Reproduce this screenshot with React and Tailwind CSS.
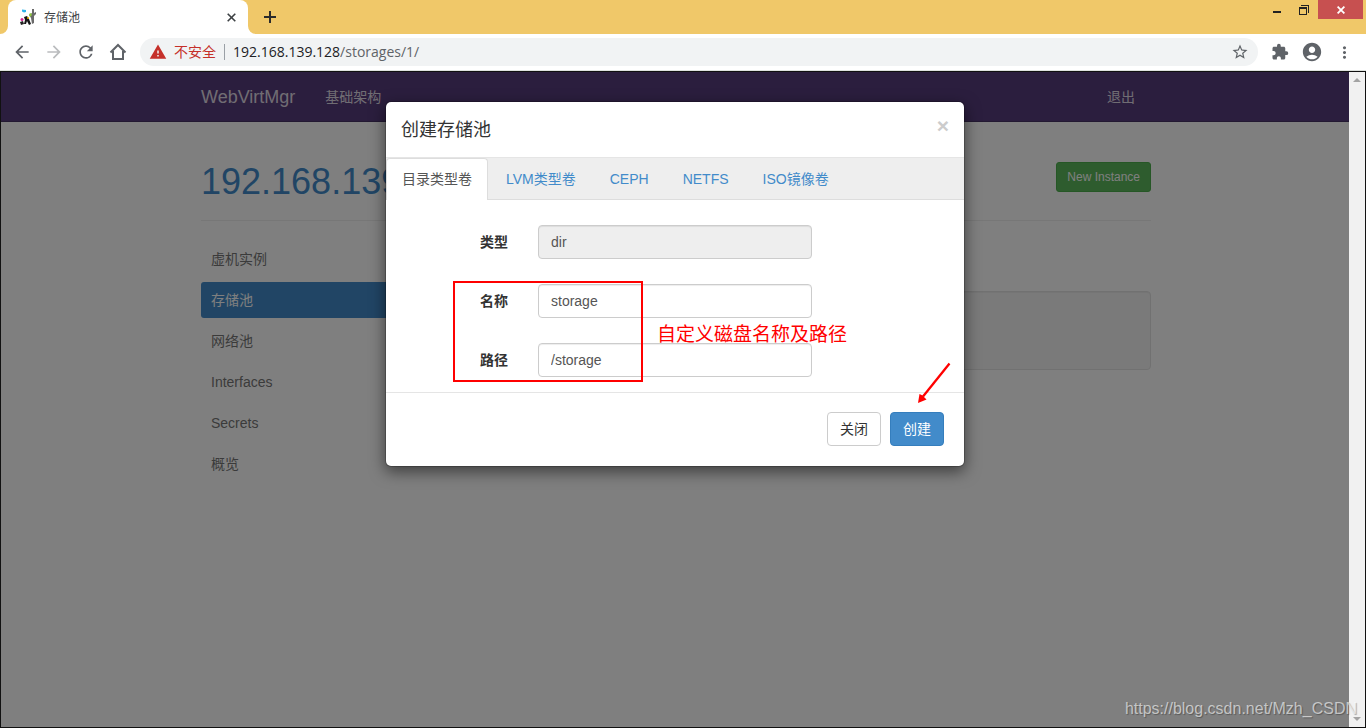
import { useState } from "react";
import {
  MdAccountCircle,
  MdArrowBack,
  MdArrowForward,
  MdExtension,
  MdMoreVert,
  MdRefresh,
  MdStarBorder,
  MdWarning,
} from "react-icons/md";

const menu = ["虚机实例", "存储池", "网络池", "Interfaces", "Secrets", "概览"];
const poolTypes = ["目录类型卷", "LVM类型卷", "CEPH", "NETFS", "ISO镜像卷"];

const Favicon = () => (
  <svg width="16" height="16" viewBox="0 0 16 16" aria-hidden="true">
    <path d="M2 .5l4 .5v2l-2 .5-2-1z" fill="#2fb4e9" />
    <path d="M12 0h2v4l2-1v2l-2 2v7l-2 1-1-6-2-3 3-2z" fill="#6a6a6a" />
    <path d="M9 5l2-1 1 2-2 2z" fill="#8cc63f" />
    <path d="M4 8l3-1 2 3 2 5-2 1-2-4-1 3H4l1-4z" fill="#151515" />
    <path d="M0 13l3-1 1 3-3 1z" fill="#222" />
    <circle cx="2" cy="10.500" r="1.500" fill="#d6248f" />
    <circle cx="8" cy="9" r="1" fill="#e8b400" />
  </svg>
);

const TitleBar = () => (
  <div className="flex h-[34px] shrink-0 items-start bg-[#f0c869] pl-2">
    <div className="relative flex h-full w-60 items-center rounded-t-lg bg-white px-3">
      <Favicon />
      <span className="ml-2 flex-1 pt-[2px] text-xs text-[#3c4043]">存储池</span>
      <button type="button" aria-label="关闭标签页">
        <svg width="9" height="9" viewBox="0 0 9 9" stroke="#3c4043" strokeWidth="1.6">
          <path d="M.7.7l7.6 7.6M8.3.7L.7 8.3" />
        </svg>
      </button>
      {/* curved feet of the active tab */}
      <svg className="absolute bottom-0 -left-2" width="8" height="8" fill="#fff">
        <path d="M8 0v8H0a8 8 0 0 0 8-8z" />
      </svg>
      <svg className="absolute -right-2 bottom-0" width="8" height="8" fill="#fff">
        <path d="M0 0v8h8a8 8 0 0 1-8-8z" />
      </svg>
    </div>
    <button type="button" aria-label="新标签页" className="flex h-full items-center pl-4">
      <svg width="12" height="12" viewBox="0 0 12 12" stroke="#2b2b2b" strokeWidth="2">
        <path d="M6 0v12M0 6h12" />
      </svg>
    </button>
    <div className="ml-auto flex items-start pr-[3px]">
      <button type="button" aria-label="最小化" className="flex h-[19px] w-[26px] items-center justify-center">
        <svg width="8" height="8" fill="#222">
          <path d="M0 5h8v2H0z" />
        </svg>
      </button>
      <button type="button" aria-label="还原" className="flex h-[19px] w-7 items-center justify-center">
        <svg width="10" height="10" fill="#222">
          <path d="M2 0h8v8H9V1H2zM0 2h8v8H0zm1 2v5h6V4z" fillRule="evenodd" />
        </svg>
      </button>
      <button type="button" aria-label="关闭" className="flex h-[19px] w-[45px] items-center justify-center bg-[#c75050]">
        <svg width="8" height="8" viewBox="0 0 8 8" stroke="#fff" strokeWidth="1.8">
          <path d="M.6.6l6.8 6.800M7.4.6L.6 7.4" />
        </svg>
      </button>
    </div>
  </div>
);

const Toolbar = () => (
  <div className="flex h-[37px] shrink-0 items-center border-b border-[#dfe3df] bg-white px-3 text-[#5f6368]">
    <div className="flex items-center gap-3">
      <button type="button" aria-label="后退">
        <MdArrowBack size={20} />
      </button>
      <button type="button" aria-label="前进" className="text-[#babcbe]">
        <MdArrowForward size={20} />
      </button>
      <button type="button" aria-label="重新加载">
        <MdRefresh size={20} />
      </button>
      <button type="button" aria-label="主页">
        <svg width="20" height="20" viewBox="0 0 20 20" fill="none" stroke="currentColor" strokeWidth="2">
          <path d="M2.500 10.500L10 3l7.500 7.500M5 9v8h10V9" />
        </svg>
      </button>
    </div>
    <div className="ml-3 flex h-7 flex-1 items-center rounded-full bg-[#f1f3f4] pr-[9px] pl-[9px]">
      <MdWarning size={18} className="text-[#c5302a]" />
      <span className="ml-[7px] text-sm text-[#c5302a]">不安全</span>
      <span className="mx-2 h-4 w-px bg-[#9aa0a6]" />
      <span className="flex-1 font-['Open_Sans','Noto_Sans',sans-serif] text-sm">
        <span className="text-[#202124]">192.168.139.128</span>/storages/1/
      </span>
      <button type="button" aria-label="收藏">
        <MdStarBorder size={18} />
      </button>
    </div>
    <div className="ml-[13px] flex items-center gap-3">
      <MdExtension size={18} />
      <MdAccountCircle size={22} />
      <MdMoreVert size={19} />
    </div>
  </div>
);

const Page = () => (
  <div className="min-w-0 flex-1 bg-white pl-[2px]">
    <nav className="-ml-[2px] h-[50px] border-b border-[#463265] bg-[#563d7c] pl-[2px]">
      <div className="mx-auto flex h-full w-[950px] max-w-full items-center pr-4 text-[#e0dbe6]">
        <a href="#home" className="text-lg">
          WebVirtMgr
        </a>
        <a href="#infrastructure" className="ml-[30px] text-sm">
          基础架构
        </a>
        <a href="#logout" className="ml-auto text-sm">
          退出
        </a>
      </div>
    </nav>

    <div className="mx-auto w-[950px] max-w-full">
      <div className="flex items-start justify-between border-b border-[#eee] pt-10 pb-[18px]">
        <h1 className="text-[36px] leading-10 text-[#428bca]">192.168.139.128</h1>
        <button
          type="button"
          className="h-[30px] rounded-[3px] border border-[#4cae4c] bg-[#5cb85c] px-[10px] text-xs text-white"
        >
          New Instance
        </button>
      </div>

      <div className="flex gap-8 pt-5">
        <ul className="flex w-[220px] flex-col gap-[5px] text-sm">
          {menu.map((item) => (
            <li key={item}>
              <a
                href="#menu"
                className={
                  item === "存储池"
                    ? "block rounded-[3px] bg-[#428bca] px-[10px] py-2 text-white"
                    : "block px-[10px] py-2 text-[#777]"
                }
              >
                {item}
              </a>
            </li>
          ))}
        </ul>
        <div className="mt-[50px] h-[79px] flex-1 rounded border border-[#e3e3e3] bg-[#f5f5f5] shadow-[inset_0_1px_1px_rgba(0,0,0,0.05)]" />
      </div>
    </div>
  </div>
);

const Field = ({ id, label, ...props }) => (
  <div className="flex items-center">
    <label htmlFor={id} className="w-[122px] text-right text-sm font-bold text-[#333]">
      {label}
    </label>
    <input
      id={id}
      type="text"
      className="ml-[30px] h-[34px] w-[274px] rounded border border-[#ccc] bg-white px-3 text-sm text-[#555] shadow-[inset_0_1px_1px_rgba(0,0,0,0.075)] read-only:bg-[#eee]"
      {...props}
    />
  </div>
);

const PoolDialog = () => {
  const [active, setActive] = useState(poolTypes[0]);
  const [name, setName] = useState("storage");
  const [path, setPath] = useState("/storage");

  return (
    <div
      role="dialog"
      aria-labelledby="pool-title"
      className="relative w-[580px] rounded-md border border-black/20 bg-white bg-clip-padding shadow-[0_5px_15px_rgba(0,0,0,0.5)]"
    >
      <div className="flex h-14 items-center justify-between border-b border-[#e5e5e5] px-[15px]">
        <h4 id="pool-title" className="text-lg text-[#333]">
          创建存储池
        </h4>
        <button type="button" aria-label="关闭" className="pb-2 text-[21px] leading-5 font-bold text-[#ccc]">
          ×
        </button>
      </div>

      <div className="flex h-[42px] gap-[2px] border-b border-[#ddd] bg-[#eee] text-sm">
        {poolTypes.map((type) => (
          <a
            key={type}
            href="#pool"
            onClick={() => setActive(type)}
            className={
              type === active
                ? "h-[42px] rounded-t border border-b-0 border-[#ddd] bg-white px-[15px] py-[10px] leading-5 text-[#555]"
                : "h-[42px] border border-transparent px-[15px] py-[10px] leading-5 text-[#428bca]"
            }
          >
            {type}
          </a>
        ))}
      </div>

      <form className="flex flex-col gap-[25px] pt-[25px] pb-[15px]">
        <Field id="pool-type" label="类型" value="dir" readOnly />
        <Field id="pool-name" label="名称" value={name} onChange={(e) => setName(e.target.value)} />
        <Field id="pool-path" label="路径" value={path} onChange={(e) => setPath(e.target.value)} />
      </form>

      <div className="flex justify-end gap-[9px] border-t border-[#e5e5e5] px-5 pt-[19px] pb-5 text-sm">
        <button type="button" className="h-[34px] rounded border border-[#ccc] bg-white px-3 text-[#333]">
          关闭
        </button>
        <button type="button" className="h-[34px] rounded border border-[#357ebd] bg-[#428bca] px-3 text-white">
          创建
        </button>
      </div>

      {/* notes drawn over the form */}
      <div className="pointer-events-none absolute top-[179px] left-[67px] h-[101px] w-[190px] border-2 border-[#f00]" />
      <p className="pointer-events-none absolute top-[219px] left-[271px] text-[19px] leading-7 text-[#f00]">
        自定义磁盘名称及路径
      </p>
      <svg className="pointer-events-none absolute top-[260px] left-[531px]" width="34" height="42" viewBox="0 0 34 42">
        <path d="M32.500 1.500L6 34.500" stroke="#f00" strokeWidth="2.300" />
        <path d="M1 41l1.500-9 3 1.500 4 4z" fill="#f00" />
      </svg>
    </div>
  );
};

const ScrollBar = () => (
  <div className="flex w-4 shrink-0 flex-col items-center justify-between bg-[#f1f1f1] py-[6px]">
    <svg width="8" height="4" fill="#a3a3a3">
      <path d="M4 0l4 4H0z" />
    </svg>
    <svg width="8" height="4" fill="#a3a3a3">
      <path d="M4 4l4-4H0z" />
    </svg>
  </div>
);

export default function App() {
  return (
    <div className="flex h-screen flex-col overflow-hidden font-['Liberation_Sans','Noto_Sans_CJK_SC',sans-serif]">
      <TitleBar />
      <Toolbar />
      <div className="relative flex min-h-0 flex-1 border border-[#111]">
        <div className="relative flex min-w-0 flex-1">
          <Page />
          <div className="absolute inset-0 flex items-start justify-center bg-black/50 pt-[29px]">
            <PoolDialog />
          </div>
        </div>
        <ScrollBar />
        <p className="absolute right-2 bottom-[6px] text-base text-white/60 [text-shadow:1px_1px_1px_rgba(0,0,0,0.3)]">
          https://blog.csdn.net/Mzh_CSDN
        </p>
      </div>
    </div>
  );
}
